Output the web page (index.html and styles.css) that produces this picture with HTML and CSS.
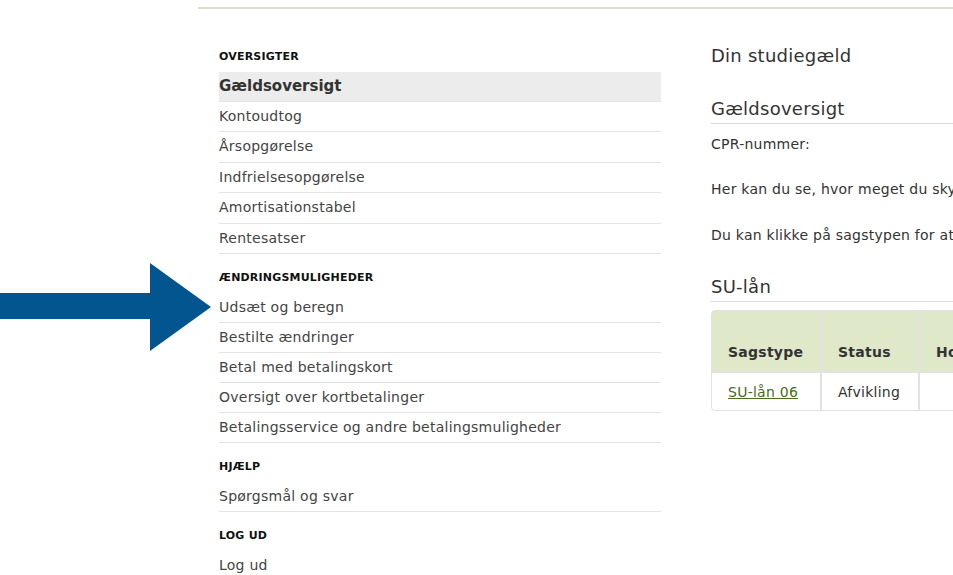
FILE: index.html
```html
<!DOCTYPE html>
<html lang="da">
<head>
    <meta charset="UTF-8">
    <title>Din studiegæld</title>
    <link rel="stylesheet" href="styles.css">
</head>
<body>
    <div class="page">
        <div class="topline"></div>
        <div class="main">
            <nav class="sidenav">
                <div class="nav-section">
                    <div class="nav-heading">Oversigter</div>
                    <a class="nav-item active" href="#">Gældsoversigt</a>
                    <a class="nav-item" href="#">Kontoudtog</a>
                    <a class="nav-item" href="#">Årsopgørelse</a>
                    <a class="nav-item" href="#">Indfrielsesopgørelse</a>
                    <a class="nav-item" href="#">Amortisationstabel</a>
                    <a class="nav-item" href="#">Rentesatser</a>
                </div>
                <div class="nav-section">
                    <div class="nav-heading">Ændringsmuligheder</div>
                    <a class="nav-item" href="#">Udsæt og beregn</a>
                    <a class="nav-item" href="#">Bestilte ændringer</a>
                    <a class="nav-item" href="#">Betal med betalingskort</a>
                    <a class="nav-item" href="#">Oversigt over kortbetalinger</a>
                    <a class="nav-item" href="#">Betalingsservice og andre betalingsmuligheder</a>
                </div>
                <div class="nav-section">
                    <div class="nav-heading">Hjælp</div>
                    <a class="nav-item" href="#">Spørgsmål og svar</a>
                </div>
                <div class="nav-section">
                    <div class="nav-heading">Log ud</div>
                    <a class="nav-item last" href="#">Log ud</a>
                </div>
            </nav>

            <div class="content">
                <h1 class="page-title">Din studiegæld</h1>
                <h2 class="sub-title">Gældsoversigt</h2>
                <p class="cpr">CPR-nummer:</p>
                <p class="text">Her kan du se, hvor meget du skylder i SU-lån, og hvordan lånet afvikles.</p>
                <p class="text">Du kan klikke på sagstypen for at se flere detaljer om dit lån.</p>
                <h2 class="sub-title small-gap">SU-lån</h2>
                <table class="loan-table">
                    <thead>
                        <tr>
                            <th class="col-type">Sagstype</th>
                            <th class="col-status">Status</th>
                            <th>Hovedstol</th>
                        </tr>
                    </thead>
                    <tbody>
                        <tr>
                            <td><a href="#">SU-lån 06</a></td>
                            <td>Afvikling</td>
                            <td></td>
                        </tr>
                    </tbody>
                </table>
            </div>
        </div>
    </div>

    <!-- markeringspil -->
    <svg class="arrow" width="211" height="88" viewBox="0 0 211 88">
        <polygon points="0,30 150,30 150,0 211,44 150,88 150,56 0,56" fill="#03558f"/>
    </svg>
</body>
</html>
```

FILE: styles.css
```css
html, body {
    overflow: hidden;
}
body {
    margin: 0;
    font-family: 'DejaVu Sans', Verdana, sans-serif;
    letter-spacing: 0.25px;
    color: #333;
    background: white;
}
.page {
    padding-left: 198px;
    padding-top: 7px;
}
.topline {
    border-top: 2px solid #d9dfc8;
    width: 900px;
}
.main {
    display: flex;
    padding-left: 21px;
    gap: 50px;
    padding-top: 32px;
}
.sidenav {
    width: 442px;
    flex-shrink: 0;
}
.nav-section {
    margin-top: 17px;
}
.nav-section:first-child {
    margin-top: 9px;
}
.nav-section:first-child .nav-item {
    line-height: 29.4px;
}
.nav-heading {
    font-size: 11px;
    font-weight: bold;
    line-height: 14px;
    letter-spacing: 0.2px;
    text-transform: uppercase;
    color: #111;
    margin-bottom: 8px;
}
.nav-item {
    display: block;
    font-size: 14px;
    line-height: 29px;
    color: #444;
    text-decoration: none;
    border-bottom: 1px solid #e3e3e3;
}
.nav-section:first-child .nav-item.active {
    background: #ececec;
    font-weight: bold;
    font-size: 15px;
    line-height: 29px;
    letter-spacing: 0;
    color: #333;
}
.nav-item.last {
    border-bottom: none;
}
.content {
    width: 700px;
    flex-shrink: 0;
    white-space: nowrap;
}
.page-title {
    font-size: 18px;
    font-weight: normal;
    margin: 3px 0 0;
    line-height: 24px;
    color: #333;
}
.sub-title {
    font-size: 18px;
    font-weight: normal;
    line-height: 24px;
    margin: 29px 0 0;
    padding-bottom: 2px;
    border-bottom: 1px solid #dcdcdc;
    color: #333;
}
.sub-title.small-gap {
    margin-top: 30px;
}
.cpr, .text {
    font-size: 14px;
    line-height: 20px;
    margin: 10px 0 0;
}
.text {
    margin-top: 25px;
}
.text + .text {
    margin-top: 26px;
}
.loan-table {
    margin-top: 8px;
    border-collapse: separate;
    border-spacing: 0;
    border: 1px solid #e2e2e2;
    border-radius: 4px;
    font-size: 14px;
}
.loan-table th {
    background: #dfe8c8;
    height: 49px;
    vertical-align: bottom;
    text-align: left;
    padding: 0 16px 11px 16px;
    border-right: 2px solid #e2e2e2;
    border-bottom: 2px solid #e2e2e2;
    color: #333;
}
.loan-table th.col-type {
    width: 76px;
}
.loan-table th.col-status {
    width: 64px;
}
.loan-table td {
    height: 37px;
    padding: 0 16px;
    border-right: 2px solid #e2e2e2;
}
.loan-table td a {
    color: #4c6a1c;
}
.loan-table th:last-child, .loan-table td:last-child {
    width: 200px;
}
.arrow {
    position: absolute;
    left: 0;
    top: 263px;
}
```
